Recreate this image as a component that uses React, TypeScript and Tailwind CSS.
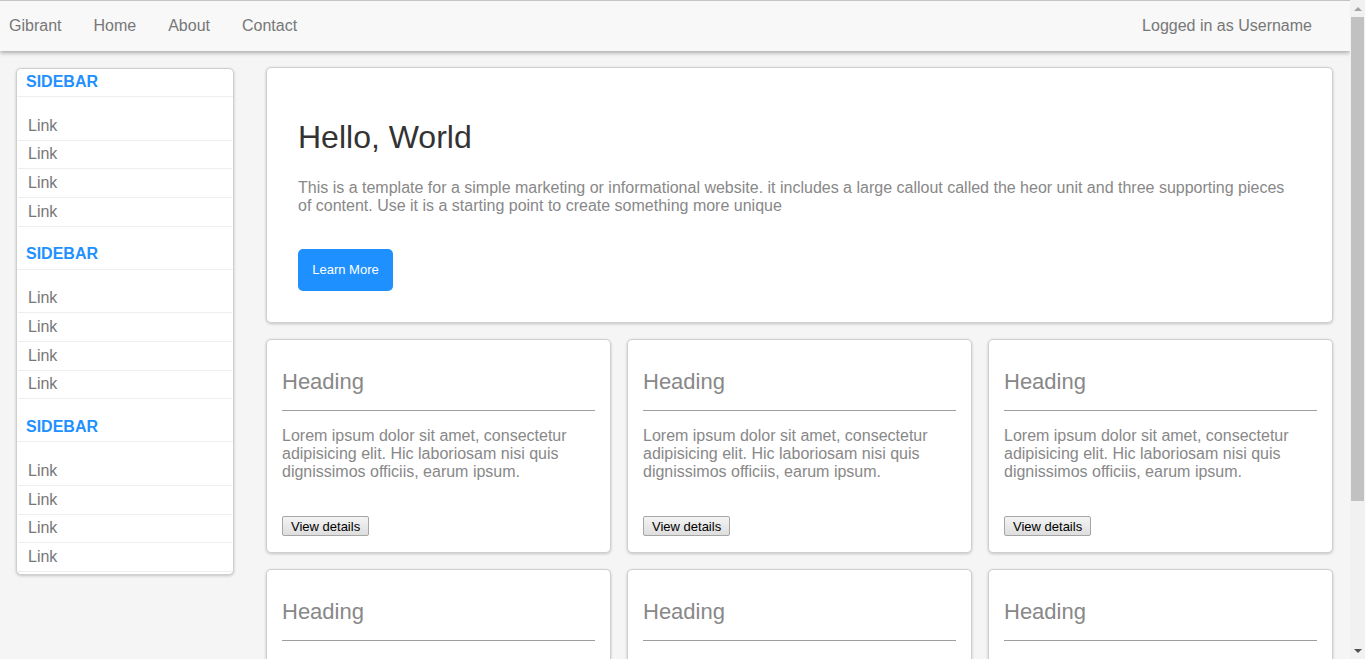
import React from "react";

const links = ["Link", "Link", "Link", "Link"];

function SidebarSection({ last }: { last?: boolean }) {
  return (
    <div className={last ? "" : "pb-[15px]"}>
      <div className="h-[28px] px-[9px] border-b border-[#eeeeee] flex items-center">
        <span className="text-[16px] font-bold text-[#1e90ff] leading-none -mt-[2px]">SIDEBAR</span>
      </div>
      <ul className="mt-[15px] mx-[1px]">
        {links.map((l, i) => (
          <li
            key={i}
            className="h-[28.67px] border-b border-[#eeeeee] flex items-center px-[10px] text-[16px] text-[#777777]"
          >
            {l}
          </li>
        ))}
      </ul>
    </div>
  );
}

function Card() {
  return (
    <div className="bg-white rounded-[5px] border border-[#cfcfcf] shadow-[0_1px_3px_rgba(0,0,0,0.2)] px-[15px] pt-[29px] pb-[16px]">
      <h2 className="text-[22px] leading-[25px] text-[#888888]">Heading</h2>
      <hr className="mt-[16px] border-0 border-t border-[#9e9e9e]" />
      <p className="mt-[16px] text-[16px] leading-[18px] text-[#888888]">
        Lorem ipsum dolor sit amet, consectetur adipisicing elit. Hic laboriosam nisi quis dignissimos officiis, earum ipsum.
      </p>
      <button className="mt-[35px] h-[20px] px-[8px] text-[13px] leading-none text-black border border-[#a6a6a6] rounded-[2px] bg-gradient-to-b from-[#f4f4f4] to-[#dedede] block">
        View details
      </button>
    </div>
  );
}

function Scrollbar() {
  return (
    <div className="fixed top-0 right-0 w-[15px] h-screen bg-[#f1f1f1] z-20 flex flex-col items-center">
      <div className="h-[17px] w-full flex items-center justify-center">
        <div className="w-0 h-0 border-l-[4px] border-r-[4px] border-b-[4px] border-l-transparent border-r-transparent border-b-[#a3a3a3]" />
      </div>
      <div className="w-[13px] h-[484px] bg-[#c1c1c1]" />
      <div className="flex-1" />
      <div className="h-[17px] w-full flex items-center justify-center">
        <div className="w-0 h-0 border-l-[4px] border-r-[4px] border-t-[4px] border-l-transparent border-r-transparent border-t-[#505050]" />
      </div>
    </div>
  );
}

export default function App() {
  return (
    <div className="min-h-screen bg-[#f5f5f5] font-['Liberation_Sans',Arial,sans-serif]">
      <Scrollbar />
      <div className="mr-[15px]">
        <nav className="h-[51px] bg-[#f8f8f8] border-t border-[#c4c4c4] shadow-[0_2px_4px_rgba(0,0,0,0.3)] flex items-center px-[9px] text-[16px] text-[#777777] relative z-10">
          <div className="flex items-center gap-[32px]">
            <span>Gibrant</span>
            <span>Home</span>
            <span>About</span>
            <span>Contact</span>
          </div>
          <span className="ml-auto mr-[29px]">Logged in as Username</span>
        </nav>
        <div className="flex gap-[32px] pl-[16px] pr-[17px] pt-[16px] pb-[20px] items-start">
          <aside className="w-[218px] shrink-0 bg-white rounded-[5px] border border-[#cfcfcf] shadow-[0_1px_3px_rgba(0,0,0,0.2)] pb-[2px] mt-[1px]">
            <SidebarSection />
            <SidebarSection />
            <SidebarSection last />
          </aside>
          <main className="flex-1 flex flex-col gap-[16px]">
            <section className="bg-white rounded-[5px] border border-[#cfcfcf] shadow-[0_1px_3px_rgba(0,0,0,0.2)] px-[31px] pt-[51px] pb-[31px]">
              <h1 className="text-[32px] leading-[36px] text-[#333333]">Hello, World</h1>
              <p className="mt-[24px] text-[16px] leading-[18px] text-[#888888]">
                This is a template for a simple marketing or informational website. it includes a large callout called the heor unit and three supporting pieces of content. Use it is a starting point to create something more unique
              </p>
              <button className="mt-[34px] h-[42px] w-[95px] rounded-[5px] bg-[#1e90ff] text-white text-[13px]">
                Learn More
              </button>
            </section>
            <div className="grid grid-cols-3 gap-[16px]">
              <Card />
              <Card />
              <Card />
              <Card />
              <Card />
              <Card />
            </div>
          </main>
        </div>
      </div>
    </div>
  );
}
